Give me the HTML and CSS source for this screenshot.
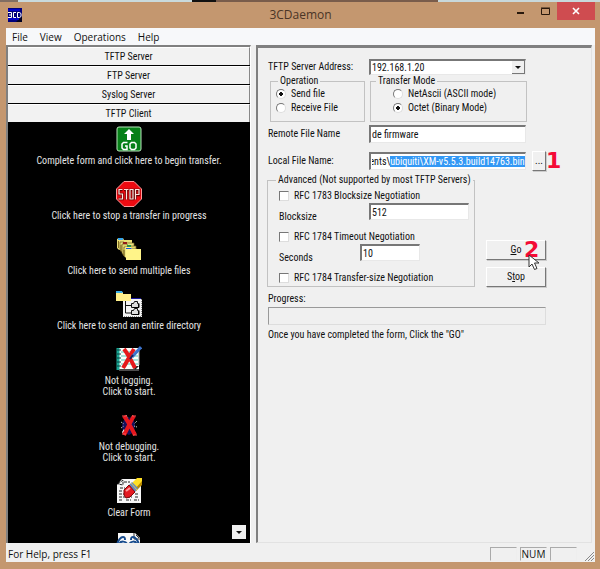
FILE: index.html
```html
<!DOCTYPE html>
<html lang="en">
<head>
<meta charset="utf-8">
<title>3CDaemon</title>
<link rel="stylesheet" href="styles.css">
</head>
<body>
<div class="window">
  <div class="backdrop"></div>
  <header class="titlebar">
    <svg class="app-icon" width="14" height="14" viewBox="0 0 14 14" aria-hidden="true">
      <rect width="14" height="14" fill="#00007a"/><path d="M8 14L14 8v6z" fill="#000020"/><path d="M0 11h11M0 2h12" stroke="#0000c8" stroke-width="2"/>
      <path d="M0 4.5h3.5v5H0M1 7h2.500M8 4.500H5.500v5H8M9.500 4.500h2l1.500 1v3l-1.500 1h-2z" fill="none" stroke="#fff"/>
    </svg>
    <h1 class="title">3CDaemon</h1>
    <div class="caption">
      <button class="cap" aria-label="Minimize"><svg width="8" height="9" viewBox="0 0 8 9"><path d="M0 6h7" stroke="#28180c" stroke-width="2"/></svg></button>
      <button class="cap" aria-label="Maximize"><svg width="9" height="9" viewBox="0 0 9 9"><path d="M.5 1.500h8v6h-8zM0 1h9" fill="none" stroke="#28180c"/></svg></button>
      <button class="cap close" aria-label="Close"><svg width="8" height="8" viewBox="0 0 8 8"><path d="M1 1l6 6M7 1L1 7" stroke="#fff" stroke-width="1.600"/></svg></button>
    </div>
  </header>
  <div class="client">
    <nav class="menu">
      <button>File</button><button>View</button><button>Operations</button><button>Help</button>
    </nav>
    <div class="panes">
      <aside class="side">
        <button class="tab">TFTP Server</button>
        <button class="tab">FTP Server</button>
        <button class="tab">Syslog Server</button>
        <button class="tab">TFTP Client</button>
        <div class="actions">
          <button class="action">
            <svg width="26" height="26" viewBox="0 0 26 26"><rect x="1" y="1" width="24" height="24" rx="2" fill="#078018" stroke="#b9e8bd"/><path d="M13 3l5 5h-3v6h-4V8H8z" fill="#fff"/><path d="M11.500 16.500h-4l-1.500 1.500v4l1.500 1.500h3.500v-3.500h-2M15.500 16.500h3l1.500 1.500v4l-1.500 1.500h-3L14 22v-4z" fill="none" stroke="#fff" stroke-width="1.500"/></svg>
            <span>Complete form and click here to begin transfer.</span>
          </button>
          <button class="action">
            <svg width="26" height="26" viewBox="0 0 26 26"><path d="M8 .5h10l7.500 7.500v10L18 25.500H8L.5 18V8z" fill="#ee0b12" stroke="#ff9c9c"/><path d="M6.500 9H3v4h3.500v5H2.500M8 9h4.500M10.500 9v9.500M14 9h3v9h-3zM19.500 18.500V9H23v5h-3" fill="none" stroke="#600" stroke-width="2.500"/><path d="M6.500 8.500H3V13h3.500v5H2.500M8 8.500h4.500M10.500 9v9.500M14 8.500h3V18h-3zM19.500 18.500v-10H23v5h-3" fill="none" stroke="#ffe4e0" stroke-width="1.200"/></svg>
            <span>Click here to stop a transfer in progress</span>
          </button>
          <button class="action">
            <svg width="26" height="26" viewBox="0 0 26 26"><path d="M1 3l2-1h4l1 2h8v10H3L1 12z" fill="#eadf78"/><path d="M2 2h5v2H2z" fill="#36a5ec"/><path d="M4 6h4l1 1h9v9H6l-2-2z" fill="#eee581" stroke="#6b5a20" stroke-width=".7"/><path d="M6 8h5l1 2h8v10H8l-2-3z" fill="#e2d670" stroke="#6b5a20" stroke-width=".7"/><path d="M7 6h4v2H7z" fill="#911c18"/><path d="M11 9h4v2h-4z" fill="#23974b"/><path d="M8 11h4l1 2h8v9h-11l-2-2z" fill="#eee581" stroke="#6b5a20" stroke-width=".7"/><path d="M9 11h6l1 2h9v11H10V13z" fill="#fff489"/><path d="M10 12h5l1 1h-6z" fill="#1855e0"/><path d="M2.500 5v7M5 9v7M8 14v6" stroke="#67500b" stroke-width=".8"/></svg>
            <span>Click here to send multiple files</span>
          </button>
          <button class="action">
            <svg width="26" height="26" viewBox="0 0 26 26"><path d="M7 8h19v18H7z" fill="#f4f4f4"/><path d="M25.500 8v17.500H7" fill="none" stroke="#888" stroke-dasharray="1 1"/><path d="M0 1h7v2h8v7H0z" fill="#fff08b"/><path d="M0 0h6l1 2H0z" fill="#3baeea"/><path d="M15 7h10v1H15z" fill="#19199c"/><path d="M9.500 10v12H15M9.500 14.500H15" fill="none" stroke="#111"/><path d="M15.500 12.500h2l1-2h3v2h1v4h-7zM15.500 19.500h2l1-2h3v2h1v4h-7z" fill="#ddd" stroke="#111"/><path d="M17 16.500h6v-4M17 23.500h6v-4" fill="none" stroke="#000"/></svg>
            <span>Click here to send an entire directory</span>
          </button>
          <button class="action">
            <svg width="26" height="26" viewBox="0 0 26 26"><path d="M2 2h21v21H2z" fill="#f8fffc"/><path d="M2 2v22" stroke="#1aa795" stroke-width="3"/><path d="M1 4h4M1 8h4M1 12h4M1 16h4M1 20h4" stroke="#063f3c"/><path d="M5 6h17M5 10h17M5 14h17M5 18h17" stroke="#58c5b8"/><path d="M3 24h20M23 5v14" stroke="#999"/><path d="M17 20h6l-4 4z" fill="#222"/><path d="M8 3c4 5 7 11 11 19M18 3C14 9 11 16 7 22" fill="none" stroke="#e5191b" stroke-width="4"/><path d="M25 1l-9 10" stroke="#3b72cb" stroke-width="3"/><path d="M17 9l-3 4" stroke="#1b235f" stroke-width="2"/></svg>
            <span>Not logging.<br>Click to start.</span>
          </button>
          <button class="action">
            <svg width="26" height="26" viewBox="0 0 26 26"><path d="M9 5l8 1 2 6-1 8-5 3-6-3-1-7z" fill="#15115c"/><path d="M5 10l3 2M5 16l3-2M21 9l-3 3M21 15l-3-1M6 21l3-3M20 21l-3-3M10 3l2 3M17 3l-2 3" stroke="#ddd" stroke-dasharray="1 1"/><path d="M8 17l-2 3 4 1" fill="#eee"/><path d="M8 4c4 5 7 11 11 19M18 4C14 10 12 16 8 23" fill="none" stroke="#e7171d" stroke-width="4"/><path d="M6 4h5M16 4h4M6 22h4M17 23h4" stroke="#ff5353"/></svg>
            <span>Not debugging.<br>Click to start.</span>
          </button>
          <button class="action">
            <svg width="26" height="26" viewBox="0 0 26 26"><path d="M6 1h19v24H1V7z" fill="#f7f7f7"/><path d="M2 6l5-4v5zM4 10h5M3 13h4M3 16h7M3 19h6M11 19h5M3 22h4M10 22h5M19 16h4M19 19h4M18 22h5M8 4h6" fill="none" stroke="#222" stroke-dasharray="3 1"/><path d="M16 5l5-5h5v6l-6 7z" fill="#ffdf24"/><path d="M26 3v4l-6 6-1-2z" fill="#b98a00"/><path d="M13 7l3-3 6 6-3 4z" fill="#668ac0"/><path d="M15 5l6 7" stroke="#e4c64f"/><path d="M8 12l5-5 6 7-5 5-4 1-2-3z" fill="#e41921" stroke="#7b0509"/><path d="M10 13l4-3" stroke="#ff9b9b" stroke-width="2"/></svg>
            <span>Clear Form</span>
          </button>
          <button class="action" aria-label="About">
            <svg width="26" height="26" viewBox="0 0 26 26"><path d="M2 0h17l5 5v21H2z" fill="#fafafa"/><path d="M18 0v6h6M20 2l3 3" fill="none" stroke="#333"/><path d="M1 12c1-5 4-8 6-8s2 1 2 3M23 12c-1-5-4-8-6-8s-2 1-2 3M3 12c1-5 8-4 8 0M13 12c1-4 7-5 8 0" fill="none" stroke="#174b8d" stroke-width="2"/></svg>
          </button>
        </div>
        <button class="scroll" aria-label="Scroll down"><i class="arrow"></i></button>
      </aside>
      <main class="main">
        <form class="form">
          <div class="row address">
            <label for="addr">TFTP Server Address:</label>
            <div class="combo">
              <select id="addr"><option>192.168.1.20</option></select>
              <span class="drop"><i class="arrow"></i></span>
            </div>
          </div>
          <div class="modes">
            <fieldset class="group operation">
              <legend>Operation</legend>
              <label class="check"><input type="radio" name="op" checked>Send file</label>
              <label class="check"><input type="radio" name="op">Receive File</label>
            </fieldset>
            <fieldset class="group transfer">
              <legend>Transfer Mode</legend>
              <label class="check"><input type="radio" name="mode">NetAscii (ASCII mode)</label>
              <label class="check"><input type="radio" name="mode" checked>Octet (Binary Mode)</label>
            </fieldset>
          </div>
          <div class="row remote">
            <label for="remote">Remote File Name</label>
            <input class="text" id="remote" value="de firmware">
          </div>
          <div class="row local">
            <label for="local">Local File Name:</label>
            <input class="text" id="local" value="C:\Documents\ubiquiti\XM-v5.5.3.build14763.bin">
            <div class="marked">
              <button type="button" class="push browse">...</button>
              <b class="mark mark-one">1</b>
            </div>
          </div>
          <div class="lower">
            <fieldset class="group advanced">
              <legend>Advanced (Not supported by most TFTP Servers)</legend>
              <label class="check"><input type="checkbox">RFC 1783 Blocksize Negotiation</label>
              <div class="field"><label for="block">Blocksize</label><input class="text block" id="block" value="512"></div>
              <label class="check"><input type="checkbox">RFC 1784 Timeout Negotiation</label>
              <div class="field seconds"><label for="secs">Seconds</label><input class="text secs" id="secs" value="10"></div>
              <label class="check"><input type="checkbox">RFC 1784 Transfer-size Negotiation</label>
            </fieldset>
            <div class="commands">
              <div class="marked">
                <button type="button" class="push"><u>G</u>o</button>
                <b class="mark mark-two">2</b>
                <svg class="cursor" width="12" height="17" viewBox="0 0 12 17" aria-hidden="true"><path d="M1 1v12l3-3 2.500 5.500 2.500-1L6.500 9H11z" fill="#fff" stroke="#333"/></svg>
              </div>
              <button type="button" class="push">S<u>t</u>op</button>
            </div>
          </div>
          <label class="progress-label" for="progress">Progress:</label>
          <progress id="progress" value="0" max="100"></progress>
          <p class="hint">Once you have completed the form, Click the "GO"</p>
        </form>
      </main>
    </div>
    <footer class="status">
      <span class="help">For Help, press F1</span>
      <span class="cell"></span><span class="cell">NUM</span><span class="cell"></span>
      <svg class="grip" width="11" height="11" viewBox="0 0 11 11" aria-hidden="true"><path d="M1 10l9-9M4 10l6-6M7 10l3-3" stroke="#888"/></svg>
    </footer>
  </div>
</div>
<script src="script.js"></script>
</body>
</html>
```
FILE: styles.css
```css
* { box-sizing: border-box; }
body {
  margin: 0;
  background: #c4976f;
  font: 10px/12px "Roboto Condensed", Roboto, "Liberation Sans", sans-serif;
  color: #111;
}
button, input, select { margin: 0; padding: 0; border: 0; font: inherit; color: inherit; border-radius: 0; outline: none; }
button { background: none; }
.window { display: flex; flex-direction: column; height: 100vh; padding: 0 5px 7px 6px; }
.backdrop {
  height: 2px;
  margin: 0 -5px 0 -6px;
  background: linear-gradient(90deg, #826e62 3%, #c9dadd 3% 32%, #111 32% 36%, #795c4b 36% 73%, #c8d8db 73%);
}
.titlebar { display: grid; grid-template-columns: 1fr auto 1fr; height: 26px; align-items: start; }
.app-icon { margin: 6px 0 0 2px; }
.title { margin: 3px 0 0; font: 12px/20px "Open Sans", sans-serif; color: #4a3526; }
.caption { display: flex; justify-content: flex-end; }
.cap { display: flex; width: 24px; height: 18px; align-items: center; justify-content: center; }
.cap.close { width: 38px; background: #cf4c50; }
.client { flex: 1; min-height: 0; display: flex; flex-direction: column; background: #f0f0f0; }
.menu { display: flex; gap: 12px; height: 17px; padding-left: 6px; background: #f7f8fa; font: 10px/16px "Open Sans", sans-serif; }
.panes { flex: 1; min-height: 0; display: grid; grid-template-columns: 245px 1fr; gap: 5px; padding-right: 3px; }
.side {
  position: relative;
  display: flex;
  flex-direction: column;
  min-height: 0;
  border: solid #808080;
  border-width: 2px 0 0 2px;
  border-right: 1px solid #fff;
  background: #000;
}
.tab { flex: none; height: 18px; margin-bottom: 1px; background: #f2f2f2; border-top: 1px solid #fff; border-right: 1px solid #888; }
.actions { flex: 1; min-height: 0; overflow: hidden; display: flex; flex-direction: column; align-items: center; gap: 15px; padding-top: 3px; }
.action { flex: none; display: flex; flex-direction: column; align-items: center; gap: 3px; line-height: 11px; color: #e4e4e4; }
.scroll { position: absolute; right: 4px; bottom: 4px; width: 14px; height: 14px; display: grid; place-items: center; background: #f0f0f0; }
.arrow { border: 3px solid transparent; border-top-color: #111; border-bottom: 0; }
.main { min-width: 0; border: solid #808080; border-width: 3px 1px 1px 2px; border-right-color: #e2e2e2; border-bottom-color: #e2e2e2; }
.form { width: max-content; padding: 11px 0 0 10px; white-space: nowrap; }
.row { display: grid; grid-template-columns: 101px 157px 20px; align-items: center; }
.combo { position: relative; display: flex; height: 16px; }
.combo select, .text {
  appearance: none;
  width: 100%;
  padding-left: 1px;
  background: #fff;
  border: solid #777;
  border-width: 2px 1px 1px 2px;
  border-right-color: #e8e8e8;
  border-bottom-color: #e8e8e8;
}
.drop { position: absolute; right: 1px; top: 2px; bottom: 1px; width: 13px; display: grid; place-items: center; background: #f0f0f0; border-right: 1px solid #777; border-bottom: 1px solid #777; }
.group { min-width: 0; margin: 0; padding: 0; border: 1px solid #c2c2c2; }
.group legend { padding: 0 2px; }
.modes { display: flex; gap: 5px; padding-left: 2px; }
.operation { width: 95px; height: 47px; }
.operation legend { margin-left: 7px; }
.transfer { width: 157px; height: 47px; }
.transfer legend { margin-left: 5px; }
.check { display: flex; align-items: center; gap: 5px; height: 14px; }
.operation .check { padding-left: 5px; }
.transfer .check { padding-left: 22px; }
.check input { appearance: none; flex: none; width: 10px; height: 10px; background: #fff; border: 1px solid; border-color: #777 #ddd #ddd #777; }
.check input[type="radio"] { border-radius: 50%; }
.check input[type="radio"]:checked { background: radial-gradient(circle, #111 2px, #fff 2px); }
.remote { margin-top: 3px; }
.text { height: 18px; }
.local { margin-top: 8px; }
#local::selection { background: #3398f5; color: #fff; }
.marked { position: relative; display: flex; }
.local .marked { justify-content: flex-end; }
.push { width: 60px; height: 20px; background: #f0f0f0; border: 1px solid; border-color: #fff #777 #777 #fff; box-shadow: 1px 1px 0 #ccc; }
.push.browse { width: 14px; }
.mark { position: absolute; font: bold 22px/22px "DejaVu Sans", sans-serif; color: #f40b35; }
.mark-one { left: 100%; top: -1px; }
.mark-two { left: 38px; top: -1px; }
.cursor { position: absolute; left: 42px; top: 14px; }
.lower { display: flex; align-items: flex-end; gap: 11px; margin: 3px 0 0 -1px; }
.advanced { width: 208px; padding-bottom: 1px; }
.advanced legend { margin-left: 8px; }
.advanced .check { padding-left: 11px; margin-top: 3px; }
.field { display: grid; grid-template-columns: 90px 100px; padding-left: 11px; height: 24px; align-items: start; }
.field label { padding-top: 8px; }
.field .text { height: 17px; }
.field.seconds { grid-template-columns: 81px 60px; }
.commands { display: flex; flex-direction: column; gap: 7px; }
.progress-label { display: block; margin: 6px 0 2px; }
progress { appearance: none; display: block; width: 100%; height: 18px; background: #f0f0f0; border: 1px solid; border-color: #999 #ddd #ddd #999; }
progress::-webkit-progress-bar { background: #f0f0f0; }
.hint { margin: 4px 0 0; }
.status { display: flex; align-items: center; gap: 3px; height: 19px; padding-top: 3px; font: 10px/15px "Open Sans", sans-serif; }
.help { flex: 1; padding-left: 2px; }
.cell { width: 27px; height: 14px; line-height: 13px; text-align: center; border: 1px solid; border-color: #aaa #eee #eee #aaa; }
.grip { align-self: flex-end; margin-left: 4px; }
```
FILE: script.js
```js
// Select the file part of the path and keep its end in view.
const local = document.getElementById("local");
local.focus();
local.setSelectionRange(local.value.indexOf("ubiquiti"), local.value.length);
local.scrollLeft = local.scrollWidth;
```
